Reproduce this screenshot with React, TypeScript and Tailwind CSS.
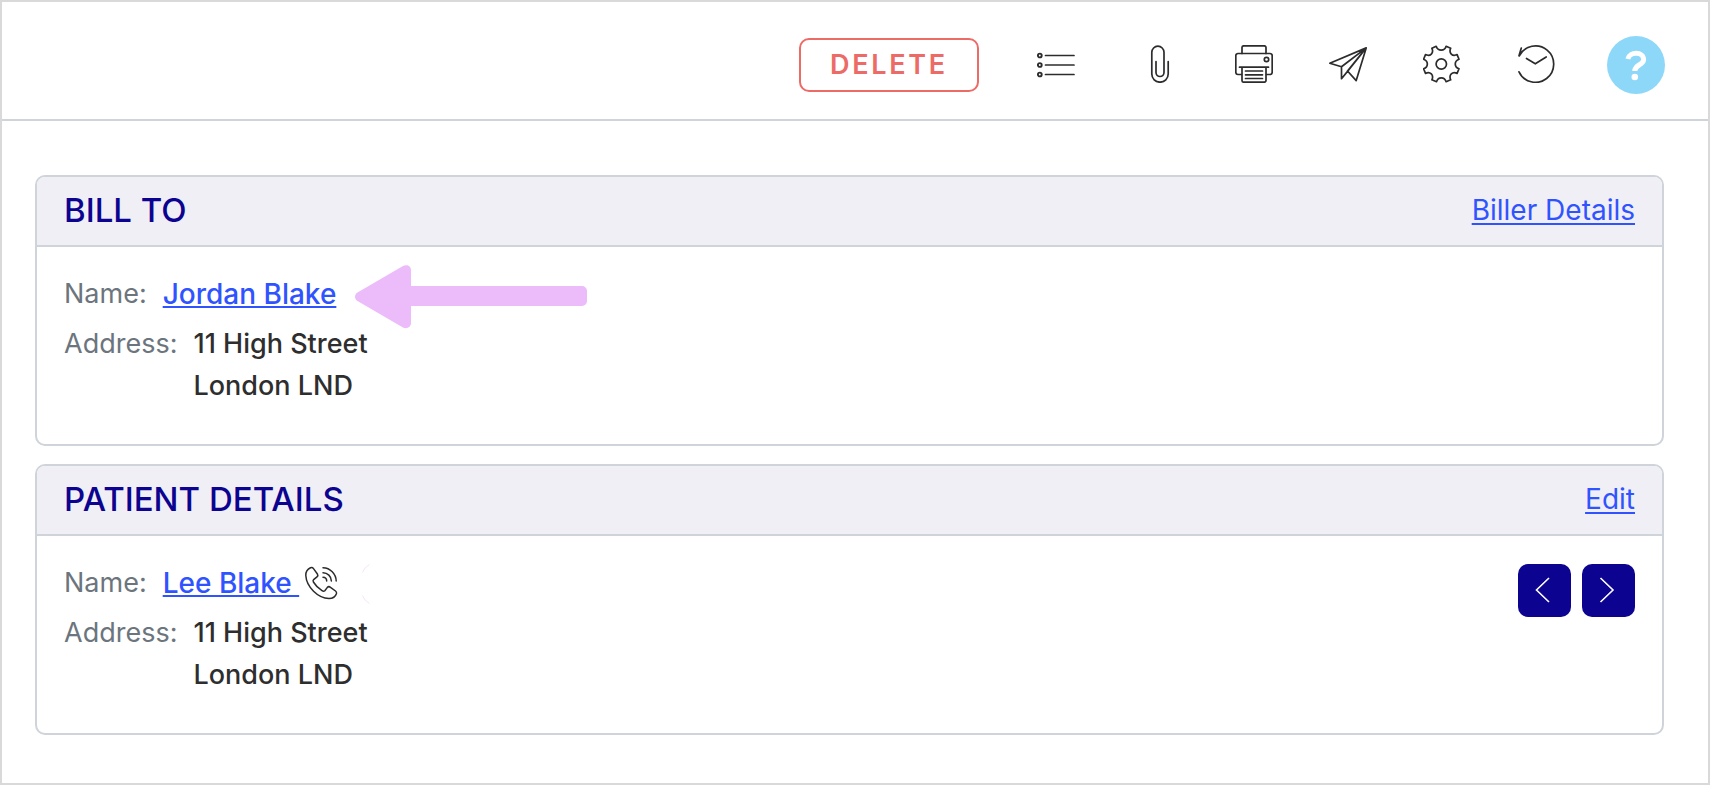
import type { ReactNode } from "react";

function IconButton({ label, wide, children }: { label: string; wide?: boolean; children: ReactNode }) {
  return (
    <button type="button" aria-label={label} className={wide ? "-mt-0.5 h-[38px] w-12" : "-mt-0.5 h-[38px] w-[38px]"}>
      <svg
        viewBox={wide ? "0 0 48 38" : "0 0 38 38"}
        className="block h-full w-full"
        fill="none"
        stroke="#2c2c2e"
        strokeWidth="1.7"
        strokeLinecap="round"
        strokeLinejoin="round"
        aria-hidden="true"
      >
        {children}
      </svg>
    </button>
  );
}

function Toolbar() {
  return (
    <header className="flex items-center justify-end gap-14 border-b-2 border-[#ced4da] pt-[34px] pr-[43px] pb-[25px]">
      <button
        type="button"
        className="mr-0.5 h-[54px] w-[180px] rounded-[10px] border-2 border-[#ed6b66] text-[27px] font-semibold tracking-widest text-[#ed6b66]"
      >
        DELETE
      </button>
      <IconButton label="List" wide>
        {[10.5, 20, 29.5].map((y) => (
          <g key={y}>
            <circle cx="2.8" cy={y} r="1.9" strokeWidth="1.9" />
            <path d={`M8.5 ${y}H37`} />
          </g>
        ))}
      </IconButton>
      <IconButton label="Attachments">
        <path d="M27.2 16.5V29a8.2 8.2 0 0 1-16.4 0V7.3a6.1 6.1 0 0 1 12.2 0V27.5a4 4 0 0 1-8 0V16.5" />
      </IconButton>
      <IconButton label="Print">
        <path d="M7 8.5V2.6a1.8 1.8 0 0 1 1.8-1.8h20.4a1.8 1.8 0 0 1 1.8 1.8V8.5" />
        <path d="M6.5 29.5H3a2.2 2.2 0 0 1-2.2-2.2V10.7a2.2 2.2 0 0 1 2.2-2.2h32a2.2 2.2 0 0 1 2.2 2.2v16.6a2.2 2.2 0 0 1-2.2 2.2h-3.5" />
        <circle cx="31.5" cy="14.5" r="2.2" />
        <path d="M4.5 22.2H33.5M7 22.2V35.4a1.8 1.8 0 0 0 1.8 1.8h20.4a1.8 1.8 0 0 0 1.8-1.8V22.2" />
        <path d="M10.5 26H27.5M10.5 29.8H27.5M10.5 33.5H27.5" />
      </IconButton>
      <IconButton label="Send">
        <path d="M37.2 2.9L.8 18.2l11.7 3.6zM37.2 2.9L12.5 21.8V33.7l6.4-7.8zM37.2 2.9L18.5 26l8.7 9.6z" />
      </IconButton>
      <IconButton label="Settings">
        <g transform="translate(-0.7 0)">
          <path d="M9.6 3.3L13.9 1.3C15.5 6.4 22.4 6.4 23.8 1.3L28.4 3.2C26.2 8 30 11.8 34.8 9.6L36.7 14.2C31.7 16 31.7 22 36.7 23.8L34.8 28.4C30 26.2 26.2 30 28.4 34.8L23.8 36.7C22 31.7 16 31.7 14.2 36.7L9.6 34.8C11.8 30 8 26.2 3.2 28.4L1.3 23.8C6.3 22 6.3 16 1.3 14.2L3.2 9.6C8 11.8 11.8 8 9.6 3.3z" />
          <circle cx="19" cy="19" r="5.2" />
        </g>
      </IconButton>
      <IconButton label="History">
        <path d="M2.3 10.8A18.2 18.2 0 1 1 2 26.8M4.3 3L2 10.8M9.5 13.5L18.3 18.8L29.2 12" />
      </IconButton>
      <button
        type="button"
        aria-label="Help"
        className="-ml-1 flex h-[58px] w-[58px] items-center justify-center rounded-full bg-[#8dd7f9]"
      >
        <svg viewBox="0 0 58 58" className="h-full w-full" fill="none" aria-hidden="true">
          <path d="M20.9 23C22.5 15.2 36.6 15.4 36.6 23.6C36.6 29.3 27.8 28.2 27.8 35" stroke="#fff" strokeWidth="5" />
          <circle cx="27.8" cy="41" r="3.3" fill="#fff" />
        </svg>
      </button>
    </header>
  );
}

function Card({ title, action, children }: { title: string; action: string; children: ReactNode }) {
  return (
    <section className="overflow-hidden rounded-[10px] border-2 border-[#ced4da]">
      <div className="flex h-[70px] items-center justify-between border-b-2 border-[#ced4da] bg-[#f0eff5] px-[27px]">
        <h2 className="text-[33px] font-medium text-[#0c0490]">{title}</h2>
        <a href="#" className="pb-[3px] text-[28px] text-[#2f54ff] underline decoration-2 underline-offset-3">
          {action}
        </a>
      </div>
      <div className="relative flex items-start justify-between px-[27px] pt-[26px] pb-[37px]">{children}</div>
    </section>
  );
}

function Details({ name, after }: { name: string; after?: ReactNode }) {
  return (
    <dl className="flex flex-col gap-2 text-[27px] leading-[42px] font-medium text-[#2e2e2e]">
      <div className="flex items-center gap-4">
        <dt className="font-normal text-[#6c757d]">Name:</dt>
        <dd className="flex items-center">
          <a href="#" className="text-[28px] whitespace-pre text-[#2f54ff] underline decoration-2 underline-offset-2">
            {name}
          </a>
          {after}
        </dd>
      </div>
      <div className="flex gap-4">
        <dt className="font-normal text-[#6c757d]">Address:</dt>
        <dd>
          11 High Street
          <br />
          London LND
        </dd>
      </div>
    </dl>
  );
}

function CallIcon() {
  return (
    <button type="button" aria-label="Call" className="ml-1.5 h-8 w-8">
      <svg
        viewBox="0 0 32 32"
        className="block h-full w-full overflow-visible"
        fill="none"
        stroke="#2c2c2e"
        strokeWidth="1.5"
        strokeLinecap="round"
        strokeLinejoin="round"
        aria-hidden="true"
      >
        <path d="M5.5 .8C3 2 .6 4.5 .8 8.5C1.5 20 13 31.2 24 31.5C28 31.5 30.5 29.5 31.5 26.5C31.7 25.5 31.3 24.7 30.5 24L25.5 20.3C24.5 19.5 23 19.7 22.2 20.6L19.8 23.7C19 24.5 18 24.4 17 23.7C13.5 21.5 10.5 18.5 8.4 15C7.9 14 7.9 13.2 8.6 12.6L12 9.8C13 9 13 8 12.4 7L8.5 1.6C7.7 .5 6.7 .3 5.5 .8z" />
        <path d="M18 .8A13.5 13.5 0 0 1 31.2 14M18 5.7A8.5 8.5 0 0 1 26.4 14M18 10.3A3.8 3.8 0 0 1 21.7 14" />
      </svg>
    </button>
  );
}

function StepButton({ label, d }: { label: string; d: string }) {
  return (
    <button type="button" aria-label={label} className="h-[53px] w-[53px] rounded-[10px] bg-[#0c0490]">
      <svg viewBox="0 0 53 53" className="block h-full w-full" fill="none" stroke="#fff" strokeWidth="1.6" aria-hidden="true">
        <path d={d} />
      </svg>
    </button>
  );
}

export default function App() {
  return (
    <div className="min-h-screen border-2 border-[#d9d9d9] bg-white font-['Inter','Liberation_Sans',sans-serif]">
      <Toolbar />
      <main className="flex flex-col gap-[18px] pt-[54px] pr-11 pb-12 pl-[33px]">
        <Card title="BILL TO" action="Biller Details">
          <Details name="Jordan Blake" />
          <svg viewBox="0 0 232 64" className="absolute top-[18px] left-[318px] h-16 w-[232px]" fill="#ebbbfa" aria-hidden="true">
            <path d="M2.5 27.5L48 1C52-1 56 1 56 5V21H227a5 5 0 0 1 5 5V36a5 5 0 0 1-5 5H56V58C56 62 52 64.5 48 62.5L2.5 36C-.8 34-.8 29.5 2.5 27.5z" />
          </svg>
        </Card>
        <Card title="PATIENT DETAILS" action="Edit">
          <Details name="Lee Blake " after={<CallIcon />} />
          <svg viewBox="0 0 8 40" className="absolute top-7 left-[325px] h-10 w-2" fill="none" stroke="#f7e3fc" aria-hidden="true">
            <path d="M7.5 .5Q2 3.5 .5 8.5M.5 31.5Q2 36.5 7.5 39.5" />
          </svg>
          <div className="flex gap-[11px] pt-0.5">
            <StepButton label="Previous patient" d="M31 14L18.5 26L31 38" />
            <StepButton label="Next patient" d="M18.5 14L31 26L18.5 38" />
          </div>
        </Card>
      </main>
    </div>
  );
}
